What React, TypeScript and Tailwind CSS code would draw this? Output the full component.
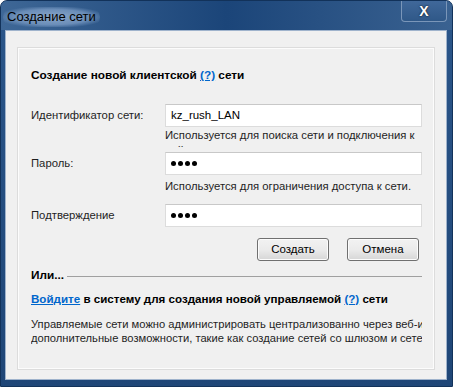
import React from "react";

const font = { fontFamily: '"Liberation Sans", "DejaVu Sans", sans-serif' };

function Dots() {
  return (
    <div className="flex gap-[2px]">
      <span className="w-[5px] h-[5px] rounded-full bg-black" />
      <span className="w-[5px] h-[5px] rounded-full bg-black" />
      <span className="w-[5px] h-[5px] rounded-full bg-black" />
      <span className="w-[5px] h-[5px] rounded-full bg-black" />
    </div>
  );
}

function Field({ label, value, dots }: { label: string; value?: string; dots?: boolean }) {
  return (
    <div className="flex items-center h-[23px]">
      <div className="w-[134px] text-[11.3px] text-[#1e1e1e]">{label}</div>
      <div className="w-[257px] h-[23px] bg-white border border-[#dcdcdc] border-t-[#c8c8c8] flex items-center px-[5px] text-[11.5px] text-black">
        {dots ? <Dots /> : value}
      </div>
    </div>
  );
}

function Btn({ children }: { children: React.ReactNode }) {
  return (
    <button className="w-[72px] h-[23px] rounded-[3px] border border-[#707070] bg-gradient-to-b from-[#f2f2f2] via-[#ebebeb] to-[#d6d6d6] text-[11.5px] text-black shadow-[inset_0_0_0_1px_#fcfcfc]">
      {children}
    </button>
  );
}

export default function App() {
  return (
    <div style={font} className="w-[453px] h-[387px] relative overflow-hidden rounded-t-[7px] bg-gradient-to-b from-[#2b568a] to-[#1f4677] border border-[#12325a]">
      <div className="h-[29px] flex items-start bg-gradient-to-r from-[#3e6796] via-[#1b4579] to-[#3a6291]">
        <div className="mt-[6px] ml-[2px] px-[4px] text-[13px] text-black rounded-full bg-[radial-gradient(ellipse_at_center,#8aa7c9_0%,#6a8db8_55%,transparent_80%)]">
          Создание сети
        </div>
        <div className="ml-auto mr-[5px] w-[46px] h-[21px] rounded-b-[4px] border border-t-0 border-[#7a96b9] bg-gradient-to-b from-[#40689a] to-[#2f5888] flex items-center justify-center">
          <span className="text-white font-bold text-[14px] leading-none" style={{ textShadow: "0 0 2px #000" }}>X</span>
        </div>
      </div>
      <div className="ml-[4px] mr-[5px] h-[350px] bg-[#f0f0f0] border border-[#9fb3cc] pt-[17px] px-[12px]">
        <div className="h-[321px] border border-[#fcfcfc] shadow-[0_0_0_1px_#dcdcdc] pl-[12px] pr-[13px] pt-[18px]">
          <div className="w-[391px] overflow-hidden">
            <div className="h-[16px] leading-[16px] text-[11.8px] font-bold text-black whitespace-nowrap">
              Создание новой клиентской <span className="text-[#0066cc] underline">(?)</span> сети
            </div>
            <div className="mt-[21px]">
              <Field label="Идентификатор сети:" value="kz_rush_LAN" />
            </div>
            <div className="ml-[134px] mt-[1px] h-[19px] overflow-hidden text-[11.3px] leading-[15px] text-[#1e1e1e] w-[257px]">
              Используется для поиска сети и подключения к ней.
            </div>
            <div className="mt-[5px]">
              <Field label="Пароль:" dots />
            </div>
            <div className="ml-[134px] mt-[3px] h-[16px] leading-[16px] text-[11.3px] text-[#1e1e1e] whitespace-nowrap">
              Используется для ограничения доступа к сети.
            </div>
            <div className="mt-[10px]">
              <Field label="Подтверждение" dots />
            </div>
            <div className="mt-[11px] flex justify-end gap-[18px] pr-[3px]">
              <Btn>Создать</Btn>
              <Btn>Отмена</Btn>
            </div>
            <div className="mt-[7px] flex items-center h-[16px]">
              <span className="text-[11.8px] font-bold text-black">Или...</span>
              <div className="ml-[3px] flex-1 h-px bg-[#a0a0a0]" />
            </div>
            <div className="mt-[7px] h-[16px] leading-[16px] text-[11.6px] font-bold text-black whitespace-nowrap">
              <span className="text-[#0066cc] underline">Войдите</span> в систему для создания новой управляемой{" "}
              <span className="text-[#0066cc] underline">(?)</span> сети
            </div>
            <div className="mt-[10px] text-[11.2px] leading-[14px] text-[#1e1e1e] whitespace-nowrap">
              <div>Управляемые сети можно администрировать централизованно через веб-интерфейс и использовать</div>
              <div>дополнительные возможности, такие как создание сетей со шлюзом и сетей</div>
            </div>
          </div>
        </div>
      </div>
    </div>
  );
}
